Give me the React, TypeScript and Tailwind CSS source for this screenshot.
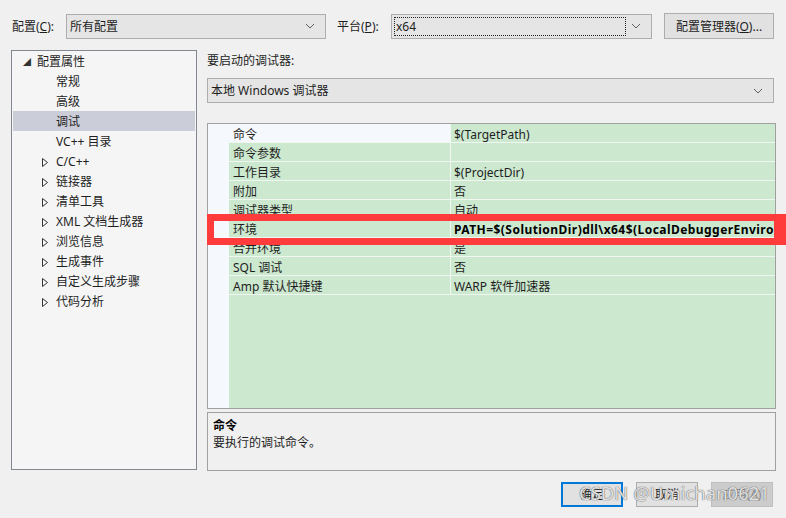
import React from "react";

const font = { fontFamily: '"Noto Sans", "Noto Sans CJK SC", sans-serif' };

function Chevron() {
  return (
    <svg width="10" height="6" viewBox="0 0 10 6" className="shrink-0">
      <polyline points="1,1 5,5 9,1" fill="none" stroke="#606060" strokeWidth="1" />
    </svg>
  );
}

function Combo({ text, width, focus }: { text: string; width: string; focus?: boolean }) {
  return (
    <div className={`${width} h-[25px] border border-[#adadad] bg-[#e5e5e5] flex items-center pl-[2px] pr-[5px]`}>
      <div
        className={`flex-1 h-[19px] flex items-center pl-[1px] pt-[1px] ${
          focus ? "border border-dotted border-[#222]" : ""
        }`}
      >
        {text}
      </div>
      <div className="w-[20px] flex justify-center">
        <Chevron />
      </div>
    </div>
  );
}

const tree = [
  { label: "常规", sub: false },
  { label: "高级", sub: false },
  { label: "调试", sub: false, selected: true },
  { label: "VC++ 目录", sub: false },
  { label: "C/C++", sub: true },
  { label: "链接器", sub: true },
  { label: "清单工具", sub: true },
  { label: "XML 文档生成器", sub: true },
  { label: "浏览信息", sub: true },
  { label: "生成事件", sub: true },
  { label: "自定义生成步骤", sub: true },
  { label: "代码分析", sub: true },
];

const rows = [
  { name: "命令", value: "$(TargetPath)", first: true },
  { name: "命令参数", value: "" },
  { name: "工作目录", value: "$(ProjectDir)" },
  { name: "附加", value: "否" },
  { name: "调试器类型", value: "自动" },
  { name: "环境", value: "PATH=$(SolutionDir)dll\\x64$(LocalDebuggerEnvironment)", bold: true },
  { name: "合并环境", value: "是" },
  { name: "SQL 调试", value: "否" },
  { name: "Amp 默认快捷键", value: "WARP 软件加速器" },
];

export default function App() {
  return (
    <div
      className="relative w-[786px] h-[518px] bg-[#f0f0f0] overflow-hidden text-[12px] text-[#1e1e1e] leading-none"
      style={font}
    >
      {/* top bar */}
      <div className="flex items-center h-[26px] mt-[13px] pl-[12px]">
        <span className="w-[54px] pt-[1px]">配置(<u>C</u>):</span>
        <Combo text="所有配置" width="w-[260px]" />
        <span className="ml-[11px] w-[54px] pt-[1px]">平台(<u>P</u>):</span>
        <Combo text="x64" width="w-[261px]" focus />
        <div className="ml-[12px] w-[110px] h-[26px] border border-[#adadad] bg-[#e1e1e1] flex items-center justify-center pt-[1px]">
          配置管理器(<u>O</u>)...
        </div>
      </div>

      <div className="flex mt-[11px] pl-[11px]">
        {/* left tree */}
        <div className="w-[186px] h-[420px] border border-[#828790] bg-[#f5f5f5] flex flex-col">
          <div className="h-[20px] flex items-center pt-[2px]">
            <span className="w-[25px] pl-[11px] text-[8px] text-[#333]">◢</span>
            <span>配置属性</span>
          </div>
          {tree.map((t) => (
            <div
              key={t.label}
              className={`h-[20px] flex items-center mx-[1px] pt-[2px] ${t.selected ? "bg-[#cbcdd9]" : ""}`}
            >
              <span className="w-[43px] pl-[29px] flex">
                {t.sub && (
                  <svg width="6" height="9" viewBox="0 0 6 9">
                    <polygon points="0.5,0.5 5.5,4.5 0.5,8.5" fill="none" stroke="#333" strokeWidth="1" />
                  </svg>
                )}
              </span>
              <span>{t.label}</span>
            </div>
          ))}
        </div>

        {/* right column */}
        <div className="ml-[10px] w-[568px] flex flex-col">
          <div className="h-[18px] flex items-center mt-[2px]">要启动的调试器:</div>
          <div className="mt-[8px]">
            <Combo text="本地 Windows 调试器" width="w-[567px]" />
          </div>

          {/* property grid */}
          <div className="mt-[20px] h-[286px] w-[569px] border border-[#a0a0a0] bg-[#cce8cf] flex">
            <div className="w-[21px] shrink-0 bg-[#f5f8fc]" />
            <div className="flex-1 min-w-0 flex flex-col">
              {rows.map((r) => (
                <div key={r.name} className="h-[19px] shrink-0 flex border-b border-[#f0f6f1]">
                  <div
                    className={`w-[222px] shrink-0 flex items-center pl-[4px] pt-[3px] border-r border-[#f0f6f1] ${
                      r.first ? "bg-[#f5f8fc]" : ""
                    }`}
                  >
                    {r.name}
                  </div>
                  <div
                    className={`flex-1 min-w-0 flex items-center pl-[3px] pt-[3px] whitespace-nowrap overflow-hidden ${
                      r.bold ? "font-bold text-black tracking-[0.45px]" : ""
                    }`}
                  >
                    {r.value}
                  </div>
                </div>
              ))}
            </div>
          </div>

          {/* description */}
          <div className="mt-[3px] h-[59px] w-[569px] border border-[#a0a0a0] bg-[#f0f0f0] px-[5px] pt-[7px] flex flex-col gap-[5px]">
            <div className="font-bold text-black">命令</div>
            <div>要执行的调试命令。</div>
          </div>
        </div>
      </div>

      {/* buttons */}
      <div className="flex justify-end gap-[13px] pr-[13px] mt-[11px]">
        <div className="w-[62px] h-[25px] border-2 border-[#0078d7] bg-[#e1e1e1] flex items-center justify-center pt-[1px]">
          确定
        </div>
        <div className="w-[62px] h-[25px] border border-[#adadad] bg-[#e1e1e1] flex items-center justify-center pt-[1px]">
          取消
        </div>
        <div className="w-[62px] h-[25px] border border-[#bfbfbf] bg-[#cccccc] text-[#8a8a8a] flex items-center justify-center pt-[1px]">
          应用(A)
        </div>
      </div>

      {/* red highlight overlay */}
      <div className="absolute left-[207px] top-[214px] w-[579px] h-[31px] border-[7px] border-[#ff3b3b]" />
      <div className="absolute left-[774px] top-[214px] w-[12px] h-[31px] bg-[#ff3b3b]" />

      {/* watermark */}
      <div
        className="absolute left-[579px] top-[484px] text-[18.5px] text-white/80 whitespace-nowrap"
        style={{ fontFamily: '"Noto Sans", sans-serif', textShadow: "0 0 1px #666, 0 0 1px #666" }}
      >
        CSDN @Umichan0621
      </div>
    </div>
  );
}
